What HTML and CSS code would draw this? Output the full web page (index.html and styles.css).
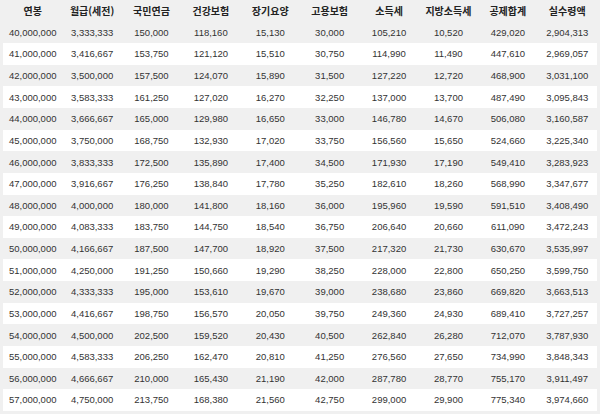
FILE: index.html
```html
<!DOCTYPE html>
<html lang="ko">
<head>
<meta charset="utf-8">
<title>연봉 실수령액 표</title>
<link rel="stylesheet" href="styles.css">
</head>
<body>
<table class="salary">
<thead>
<tr><th>연봉</th><th>월급(세전)</th><th>국민연금</th><th>건강보험</th><th>장기요양</th><th>고용보험</th><th>소득세</th><th>지방소득세</th><th>공제합계</th><th>실수령액</th></tr>
</thead>
<tbody>
<tr><td>40,000,000</td><td>3,333,333</td><td>150,000</td><td>118,160</td><td>15,130</td><td>30,000</td><td>105,210</td><td>10,520</td><td>429,020</td><td>2,904,313</td></tr>
<tr><td>41,000,000</td><td>3,416,667</td><td>153,750</td><td>121,120</td><td>15,510</td><td>30,750</td><td>114,990</td><td>11,490</td><td>447,610</td><td>2,969,057</td></tr>
<tr><td>42,000,000</td><td>3,500,000</td><td>157,500</td><td>124,070</td><td>15,890</td><td>31,500</td><td>127,220</td><td>12,720</td><td>468,900</td><td>3,031,100</td></tr>
<tr><td>43,000,000</td><td>3,583,333</td><td>161,250</td><td>127,020</td><td>16,270</td><td>32,250</td><td>137,000</td><td>13,700</td><td>487,490</td><td>3,095,843</td></tr>
<tr><td>44,000,000</td><td>3,666,667</td><td>165,000</td><td>129,980</td><td>16,650</td><td>33,000</td><td>146,780</td><td>14,670</td><td>506,080</td><td>3,160,587</td></tr>
<tr><td>45,000,000</td><td>3,750,000</td><td>168,750</td><td>132,930</td><td>17,020</td><td>33,750</td><td>156,560</td><td>15,650</td><td>524,660</td><td>3,225,340</td></tr>
<tr><td>46,000,000</td><td>3,833,333</td><td>172,500</td><td>135,890</td><td>17,400</td><td>34,500</td><td>171,930</td><td>17,190</td><td>549,410</td><td>3,283,923</td></tr>
<tr><td>47,000,000</td><td>3,916,667</td><td>176,250</td><td>138,840</td><td>17,780</td><td>35,250</td><td>182,610</td><td>18,260</td><td>568,990</td><td>3,347,677</td></tr>
<tr><td>48,000,000</td><td>4,000,000</td><td>180,000</td><td>141,800</td><td>18,160</td><td>36,000</td><td>195,960</td><td>19,590</td><td>591,510</td><td>3,408,490</td></tr>
<tr><td>49,000,000</td><td>4,083,333</td><td>183,750</td><td>144,750</td><td>18,540</td><td>36,750</td><td>206,640</td><td>20,660</td><td>611,090</td><td>3,472,243</td></tr>
<tr><td>50,000,000</td><td>4,166,667</td><td>187,500</td><td>147,700</td><td>18,920</td><td>37,500</td><td>217,320</td><td>21,730</td><td>630,670</td><td>3,535,997</td></tr>
<tr><td>51,000,000</td><td>4,250,000</td><td>191,250</td><td>150,660</td><td>19,290</td><td>38,250</td><td>228,000</td><td>22,800</td><td>650,250</td><td>3,599,750</td></tr>
<tr><td>52,000,000</td><td>4,333,333</td><td>195,000</td><td>153,610</td><td>19,670</td><td>39,000</td><td>238,680</td><td>23,860</td><td>669,820</td><td>3,663,513</td></tr>
<tr><td>53,000,000</td><td>4,416,667</td><td>198,750</td><td>156,570</td><td>20,050</td><td>39,750</td><td>249,360</td><td>24,930</td><td>689,410</td><td>3,727,257</td></tr>
<tr><td>54,000,000</td><td>4,500,000</td><td>202,500</td><td>159,520</td><td>20,430</td><td>40,500</td><td>262,840</td><td>26,280</td><td>712,070</td><td>3,787,930</td></tr>
<tr><td>55,000,000</td><td>4,583,333</td><td>206,250</td><td>162,470</td><td>20,810</td><td>41,250</td><td>276,560</td><td>27,650</td><td>734,990</td><td>3,848,343</td></tr>
<tr><td>56,000,000</td><td>4,666,667</td><td>210,000</td><td>165,430</td><td>21,190</td><td>42,000</td><td>287,780</td><td>28,770</td><td>755,170</td><td>3,911,497</td></tr>
<tr><td>57,000,000</td><td>4,750,000</td><td>213,750</td><td>168,380</td><td>21,560</td><td>42,750</td><td>299,000</td><td>29,900</td><td>775,340</td><td>3,974,660</td></tr>
</tbody>
</table>
</body>
</html>
```
FILE: styles.css
```css
html, body {
  margin: 0;
  padding: 0;
  background: #f0f0f0;
}
body {
  font-family: "Liberation Sans", Arial, "Noto Sans CJK KR", sans-serif;
  color: #333;
}
.salary {
  width: 594px;
  margin: 0 3px;
  border-collapse: collapse;
  table-layout: fixed;
}
.salary th,
.salary td {
  padding: 0;
  text-align: center;
  white-space: nowrap;
}
.salary th {
  height: 21.5px;
  font-family: "Noto Sans CJK KR", sans-serif;
  font-size: 10px;
  font-weight: bold;
  color: #222;
}
.salary td {
  height: 21.625px;
  font-size: 9.5px;
}
.salary tbody tr:nth-child(even) {
  background: #fff;
}
```
